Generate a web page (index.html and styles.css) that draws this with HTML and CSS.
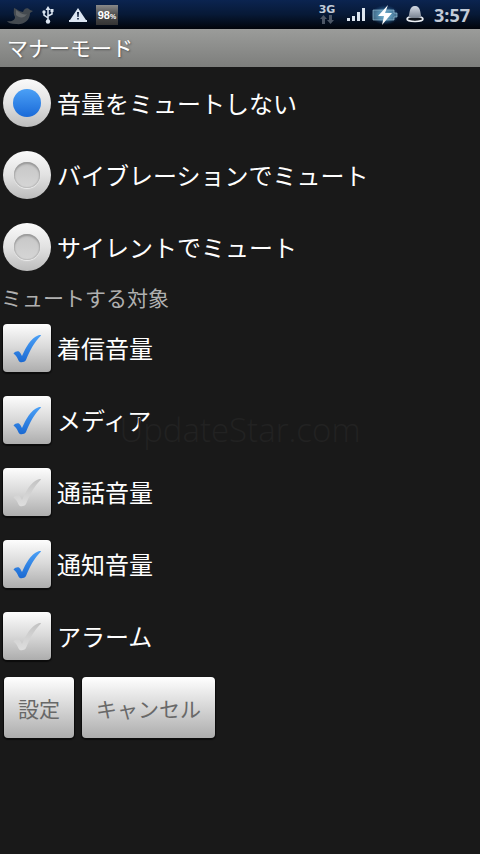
FILE: index.html
```
<!DOCTYPE html>
<html lang="ja">
<head>
	<meta charset="utf-8">
	<meta name="viewport" content="width=device-width, initial-scale=1">
	<title>マナーモード</title>
	<link rel="stylesheet" href="styles.css">
</head>
<body>

	<!-- shared gradients and shapes -->
	<svg class="defs" aria-hidden="true">
		<defs>
			<linearGradient id="blue" x1="0" y1="0" x2="0" y2="1">
				<stop offset="0" stop-color="#4ba0f6" />
				<stop offset="1" stop-color="#1a69d2" />
			</linearGradient>
			<linearGradient id="pale" x1="0" y1="0" x2="0" y2="1">
				<stop offset="0" stop-color="#c2c2c2" />
				<stop offset="0.4" stop-color="#cfcfcf" />
				<stop offset="1" stop-color="#dedede" />
			</linearGradient>
			<linearGradient id="bell" x1="0" y1="0" x2="0" y2="1">
				<stop offset="0" stop-color="#d5dce6" />
				<stop offset="1" stop-color="#76808f" />
			</linearGradient>
			<radialGradient id="glow">
				<stop offset="0" stop-color="#8fd0ef" />
				<stop offset="0.5" stop-color="#3c7fa8" stop-opacity="0.8" />
				<stop offset="1" stop-color="#1c4a80" stop-opacity="0" />
			</radialGradient>
			<path id="tick" d="M10.500 29.500C12 27.500 14.500 26.700 16 27.500C17.500 28.500 18 30.500 19 32C23 23 28 14 35 11.500C37 10.800 38.500 11 38 11.600C31 18.500 26.500 27.500 23 36C21.500 38.500 17 39 15.800 37C14.500 34.500 13.500 31.500 10.500 29.500Z" />
		</defs>
	</svg>

	<div class="statusbar">
		<div class="notices">
			<svg class="bird" width="28" height="22" viewBox="0 0 28 22">
				<path d="M2 17C7 18 10 16 10 13C8 10 9 7 9 4C12 5 15 8 18 8C19 4 23 3 25 6L28 7L25 9C25 17 18 21 11 20C6 20 3 19 2 17Z" fill="#444a50" />
				<path d="M11 6C15 8 18 12 22 10C19 15 14 14 11 11Z" fill="#63676a" />
			</svg>
			<svg class="usb" width="12" height="18" viewBox="0 0 12 18">
				<path d="M6 3V15M6 12L2 9V6M6 10L10 8V5" fill="none" stroke="#dce6f2" stroke-width="1.500" />
				<path d="M6 0L8.500 4H3.500ZM8.500 3H11.500V6H8.500Z" fill="#dce6f2" />
				<circle cx="2" cy="6" r="1.700" fill="#dce6f2" />
				<circle cx="6" cy="15.500" r="2.200" fill="#dce6f2" />
			</svg>
			<svg class="warning" width="18" height="14" viewBox="0 0 18 14">
				<path d="M9 0L17 12H18V14H0V12H1Z" fill="#dce6f2" />
				<path d="M8 4H10L9.600 9H8.400ZM8.200 10H9.800V11.500H8.200Z" fill="#0c1c38" />
			</svg>
			<span class="percent">98<small>%</small></span>
		</div>
		<div class="signals">
			<div class="network">
				<span>3G</span>
				<svg width="14" height="10" viewBox="0 0 14 10">
					<path d="M3.500 0L7 4H5V9H2V4H0ZM9 0H12V5H14L10.500 9L7 5H9Z" fill="#4c5665" />
				</svg>
			</div>
			<svg class="bars" width="18" height="13" viewBox="0 0 18 13">
				<path d="M0 10H3V13H0ZM5 8H8V13H5ZM10 4H13V13H10ZM15 0H18V13H15Z" fill="#dde6f0" />
			</svg>
			<svg class="battery" width="28" height="20" viewBox="0 0 28 20">
				<ellipse cx="14" cy="10" rx="14" ry="10" fill="url(#glow)" />
				<path d="M2 5H23V8H26V12H23V15H2Z" fill="#79afca" fill-opacity="0.5" stroke="#a9d4e6" stroke-opacity="0.6" />
				<path d="M17 0L7 11H13L11 20L21 8H14Z" fill="#fff" />
			</svg>
			<svg class="bell" width="18" height="17" viewBox="0 0 18 17">
				<ellipse cx="9" cy="13" rx="8" ry="2.500" fill="#10151d" stroke="#eef2f7" stroke-width="1.500" />
				<path d="M9 0C3 0 4 7 2.500 11C5 12.500 13 12.500 15.500 11C14 7 15 0 9 0Z" fill="url(#bell)" />
				<path d="M6 12H12C11 15 7 15 6 12Z" fill="#10151d" />
			</svg>
			<time class="clock">3:57</time>
		</div>
	</div>

	<h1 class="titlebar">マナーモード</h1>

	<form class="settings">
		<label class="option">
			<span class="control radio">
				<input type="radio" name="mode" checked>
			</span>
			音量をミュートしない
		</label>
		<label class="option">
			<span class="control radio">
				<input type="radio" name="mode">
			</span>
			バイブレーションでミュート
		</label>
		<label class="option">
			<span class="control radio">
				<input type="radio" name="mode">
			</span>
			サイレントでミュート
		</label>

		<h2 class="section">ミュートする対象</h2>

		<label class="option">
			<span class="control check">
				<input type="checkbox" checked>
				<svg viewBox="0 0 48 48"><use href="#tick" /></svg>
			</span>
			着信音量
		</label>
		<label class="option">
			<span class="control check">
				<input type="checkbox" checked>
				<svg viewBox="0 0 48 48"><use href="#tick" /></svg>
			</span>
			メディア
			<span class="watermark">UpdateStar.com</span>
		</label>
		<label class="option">
			<span class="control check">
				<input type="checkbox">
				<svg viewBox="0 0 48 48"><use href="#tick" /></svg>
			</span>
			通話音量
		</label>
		<label class="option">
			<span class="control check">
				<input type="checkbox" checked>
				<svg viewBox="0 0 48 48"><use href="#tick" /></svg>
			</span>
			通知音量
		</label>
		<label class="option">
			<span class="control check">
				<input type="checkbox">
				<svg viewBox="0 0 48 48"><use href="#tick" /></svg>
			</span>
			アラーム
		</label>

		<div class="buttons">
			<button type="button">設定</button>
			<button type="button">キャンセル</button>
		</div>
	</form>

</body>
</html>
```

FILE: styles.css
```
* { box-sizing: border-box; }

body { margin: 0; min-height: 100vh; background: #191919; color: #fff;
       font-family: "Noto Sans CJK JP", sans-serif; }

.defs { position: absolute; width: 0; height: 0; }

/* status bar */
.statusbar { display: flex; justify-content: space-between; height: 29px; padding: 0 10px 0 5px;
             background: linear-gradient(#0b2450, #071936 50%, #01040a); }
.notices, .signals { display: flex; align-items: center; }
.usb     { margin-left: 9px; }
.warning { margin-left: 15px; }
.percent { margin-left: 9px; width: 22px; height: 20px; background: linear-gradient(#8a8a8a, #4c4c4c 50%, #333);
           font: bold 11px/20px "Liberation Sans", sans-serif; text-align: center; white-space: nowrap; }
.percent small { font-size: 7px; }

.network { display: flex; flex-direction: column; align-items: center; width: 16px;
           font: bold 11px/11px "DejaVu Sans", sans-serif; color: #c3ccd8; }
.bars    { margin-left: 12px; }
.battery { margin-left: 6px; }
.bell    { margin-left: 7px; }
.clock   { margin-left: 10px; font: bold 18px/28px "Open Sans", sans-serif; color: #c3ccd8; }

.titlebar { margin: 0; height: 38px; padding-left: 7px; background: linear-gradient(#9b9c9a, #7d7e7c);
            font-size: 21px; font-weight: 400; line-height: 36px; text-shadow: 1px 1px 2px #555; }

/* option rows */
.option   { position: relative; display: flex; align-items: center; gap: 6px; height: 72px; padding-left: 3px;
            font-size: 24px; line-height: 32px; }
.section  { margin: 0; padding-left: 1px; font-size: 21px; font-weight: 400; line-height: 29px; color: #b0b0b0; }

.control  { display: grid; width: 48px; height: 48px; }
.control > * { grid-area: 1 / 1; width: 48px; height: 48px; margin: 0; }
.control input { appearance: none; }
.control svg   { pointer-events: none; }

.radio input { border-radius: 50%; background: linear-gradient(#fafafa, #e2e2e2 50%, #bcbcbc);
               display: grid; place-items: center; }
.radio input::before { content: ""; width: 26px; height: 26px; border-radius: 50%;
                       background: linear-gradient(#c6c6c6, #d6d6d6);
                       box-shadow: inset 0 2px 2px #999, inset 0 0 1px 1px #bbb, 0 1px 1px #eee; }
.radio input:checked::before { width: 28px; height: 28px; background: linear-gradient(#4ba0f6, #1a6ad8); box-shadow: none; }

.check input { border-radius: 4px; background: linear-gradient(#fdfdfd, #d8d8d8 50%, #adadad);
               box-shadow: 0 1px 1px 1px #0c0c0c; }
.check svg { fill: url(#pale); }
.check input:checked + svg { fill: url(#blue); }

.watermark { position: absolute; left: 0; right: 0; top: 28px; text-align: center;
             font: 300 33px/36px "Open Sans", sans-serif; color: #222; pointer-events: none; }

/* buttons */
.buttons { display: flex; gap: 8px; padding: 5px 4px; }
.buttons button { height: 61px; padding: 0 14px; border: 0; border-radius: 4px;
                  background: linear-gradient(#fff, #d6d6d6 50%, #adadad); box-shadow: 0 1px 1px 1px #0c0c0c;
                  font-family: inherit; font-size: 21px; color: #686868; }
```
